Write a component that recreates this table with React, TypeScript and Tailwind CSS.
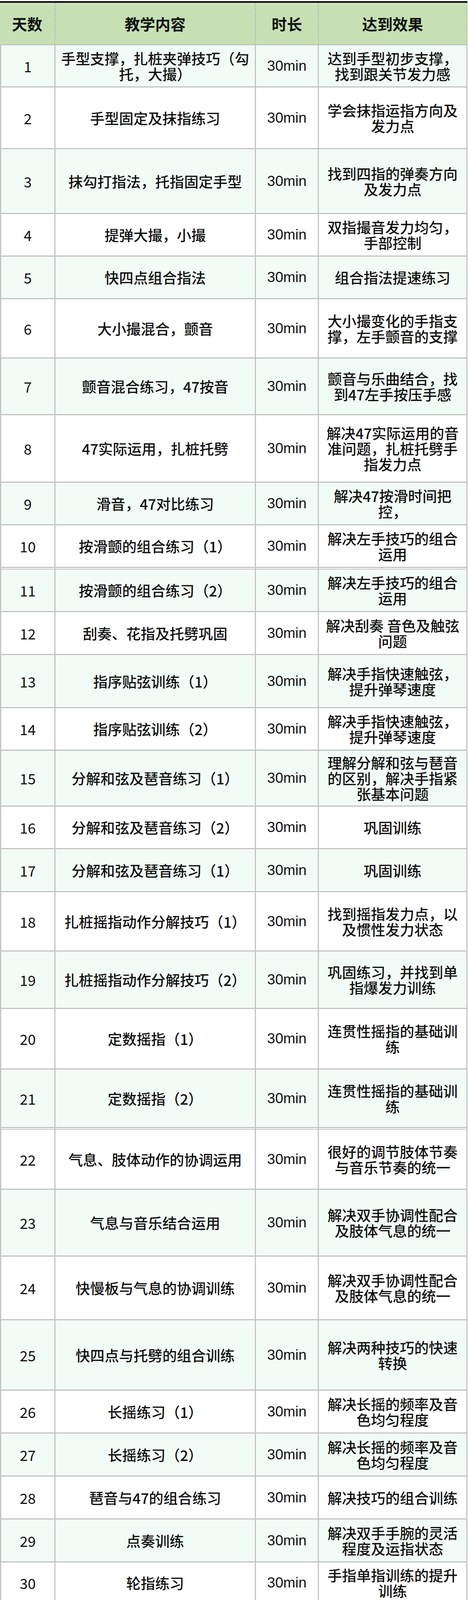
import React from "react";

type Row = {
  day: string;
  content: string[];
  effect: string[];
  h: string;
  gapAbove?: boolean;
};

const rows: Row[] = [
  { day: "1", content: ["手型支撑，扎桩夹弹技巧（勾", "托，大撮）"], effect: ["达到手型初步支撑，", "找到跟关节发力感"], h: "h-[108px]" },
  { day: "2", content: ["手型固定及抹指练习"], effect: ["学会抹指运指方向及", "发力点"], h: "h-[158px]" },
  { day: "3", content: ["抹勾打指法，托指固定手型"], effect: ["找到四指的弹奏方向", "及发力点"], h: "h-[166px]" },
  { day: "4", content: ["提弹大撮，小撮"], effect: ["双指撮音发力均匀，", "手部控制"], h: "h-[109px]" },
  { day: "5", content: ["快四点组合指法"], effect: ["组合指法提速练习"], h: "h-[109px]" },
  { day: "6", content: ["大小撮混合，颤音"], effect: ["大小撮变化的手指支", "撑，左手颤音的支撑"], h: "h-[152px]" },
  { day: "7", content: ["颤音混合练习，47按音"], effect: ["颤音与乐曲结合，找", "到47左手按压手感"], h: "h-[145px]" },
  { day: "8", content: ["47实际运用，扎桩托劈"], effect: ["解决47实际运用的音", "准问题，扎桩托劈手", "指发力点"], h: "h-[173px]" },
  { day: "9", content: ["滑音，47对比练习"], effect: ["解决47按滑时间把", "控，"], h: "h-[109px]" },
  { day: "10", content: ["按滑颤的组合练习（1）"], effect: ["解决左手技巧的组合", "运用"], h: "h-[109px]" },
  { day: "11", content: ["按滑颤的组合练习（2）"], effect: ["解决左手技巧的组合", "运用"], h: "h-[109px]", gapAbove: true },
  { day: "12", content: ["刮奏、花指及托劈巩固"], effect: ["解决刮奏 音色及触弦", "问题"], h: "h-[110px]" },
  { day: "13", content: ["指序贴弦训练（1）"], effect: ["解决手指快速触弦，", "提升弹琴速度"], h: "h-[136px]" },
  { day: "14", content: ["指序贴弦训练（2）"], effect: ["解决手指快速触弦，", "提升弹琴速度"], h: "h-[109px]" },
  { day: "15", content: ["分解和弦及琶音练习（1）"], effect: ["理解分解和弦与琶音", "的区别，解决手指紧", "张基本问题"], h: "h-[143px]" },
  { day: "16", content: ["分解和弦及琶音练习（2）"], effect: ["巩固训练"], h: "h-[109px]" },
  { day: "17", content: ["分解和弦及琶音练习（1）"], effect: ["巩固训练"], h: "h-[110px]" },
  { day: "18", content: ["扎桩摇指动作分解技巧（1）"], effect: ["找到摇指发力点，以", "及惯性发力状态"], h: "h-[152px]" },
  { day: "19", content: ["扎桩摇指动作分解技巧（2）"], effect: ["巩固练习，并找到单", "指爆发力训练"], h: "h-[147px]" },
  { day: "20", content: ["定数摇指（1）"], effect: ["连贯性摇指的基础训", "练"], h: "h-[155px]" },
  { day: "21", content: ["定数摇指（2）"], effect: ["连贯性摇指的基础训", "练"], h: "h-[150px]" },
  { day: "22", content: ["气息、肢体动作的协调运用"], effect: ["很好的调节肢体节奏", "与音乐节奏的统一"], h: "h-[154px]", gapAbove: true },
  { day: "23", content: ["气息与音乐结合运用"], effect: ["解决双手协调性配合", "及肢体气息的统一"], h: "h-[171px]" },
  { day: "24", content: ["快慢板与气息的协调训练"], effect: ["解决双手协调性配合", "及肢体气息的统一"], h: "h-[163px]" },
  { day: "25", content: ["快四点与托劈的组合训练"], effect: ["解决两种技巧的快速", "转换"], h: "h-[180px]" },
  { day: "26", content: ["长摇练习（1）"], effect: ["解决长摇的频率及音", "色均匀程度"], h: "h-[110px]" },
  { day: "27", content: ["长摇练习（2）"], effect: ["解决长摇的频率及音", "色均匀程度"], h: "h-[110px]" },
  { day: "28", content: ["琶音与47的组合练习"], effect: ["解决技巧的组合训练"], h: "h-[110px]" },
  { day: "29", content: ["点奏训练"], effect: ["解决双手手腕的灵活", "程度及运指状态"], h: "h-[110px]" },
  { day: "30", content: ["轮指练习"], effect: ["手指单指训练的提升", "训练"], h: "h-[106px]" },
];

function Lines({ lines }: { lines: string[] }) {
  return (
    <div className="flex flex-col items-center">
      {lines.map((l, i) => (
        <span key={i} className="block h-[40px] whitespace-pre">
          {l}
        </span>
      ))}
    </div>
  );
}

const cell = "flex items-center justify-center text-center border-r-[3px] border-[#c4c4c4]";

function BodyRow({ row, index }: { row: Row; index: number }) {
  const bg = index % 2 === 0 ? "bg-[#f2fcf7]" : "bg-white";
  return (
    <>
      {row.gapAbove && (
        <>
          <div className="flex h-[2px] border-l-[3px] border-[#c4c4c4] bg-white">
            <div className="w-[139px] border-r-[3px] border-[#c4c4c4]" />
            <div className="w-[513px] border-r-[3px] border-[#c4c4c4]" />
            <div className="w-[161px] border-r-[3px] border-[#c4c4c4]" />
            <div className="w-[380px] border-r-[3px] border-[#c4c4c4]" />
          </div>
          <div className="h-[2px] bg-[#c4c4c4]" />
        </>
      )}
      <div className={`flex border-l-[3px] border-b-[3px] border-[#c4c4c4] ${bg} ${row.h}`}>
        <div className={`${cell} w-[139px] font-normal`}>{row.day}</div>
        <div className={`${cell} w-[513px] px-2`}>
          <Lines lines={row.content} />
        </div>
        <div className={`${cell} w-[161px] font-['Liberation_Sans',sans-serif] font-normal`}>30min</div>
        <div className={`${cell} w-[380px] px-1`}>
          <Lines lines={row.effect} />
        </div>
      </div>
    </>
  );
}

const headCell =
  "flex items-center justify-center border-r-[3px] border-dotted border-[#b4b4b4] text-[39px] font-bold";

export default function App() {
  return (
    <div className="w-[1200px] bg-white pt-[3px] pb-[4px] font-['Noto_Sans_CJK_SC','Noto_Sans',sans-serif] text-[37px] leading-[40px] font-medium text-[#111]">
      <div className="w-[1196px]">
        <div className="flex h-[110px] border-t-4 border-black bg-[#c6e0b4]">
          <div className={`${headCell} w-[142px]`}>天数</div>
          <div className={`${headCell} w-[513px]`}>教学内容</div>
          <div className={`${headCell} w-[161px]`}>时长</div>
          <div className={`${headCell} w-[380px]`}>达到效果</div>
        </div>
        <div className="h-[3px] bg-[#c4c4c4]" />
        {rows.map((r, i) => (
          <BodyRow key={r.day} row={r} index={i} />
        ))}
      </div>
    </div>
  );
}
